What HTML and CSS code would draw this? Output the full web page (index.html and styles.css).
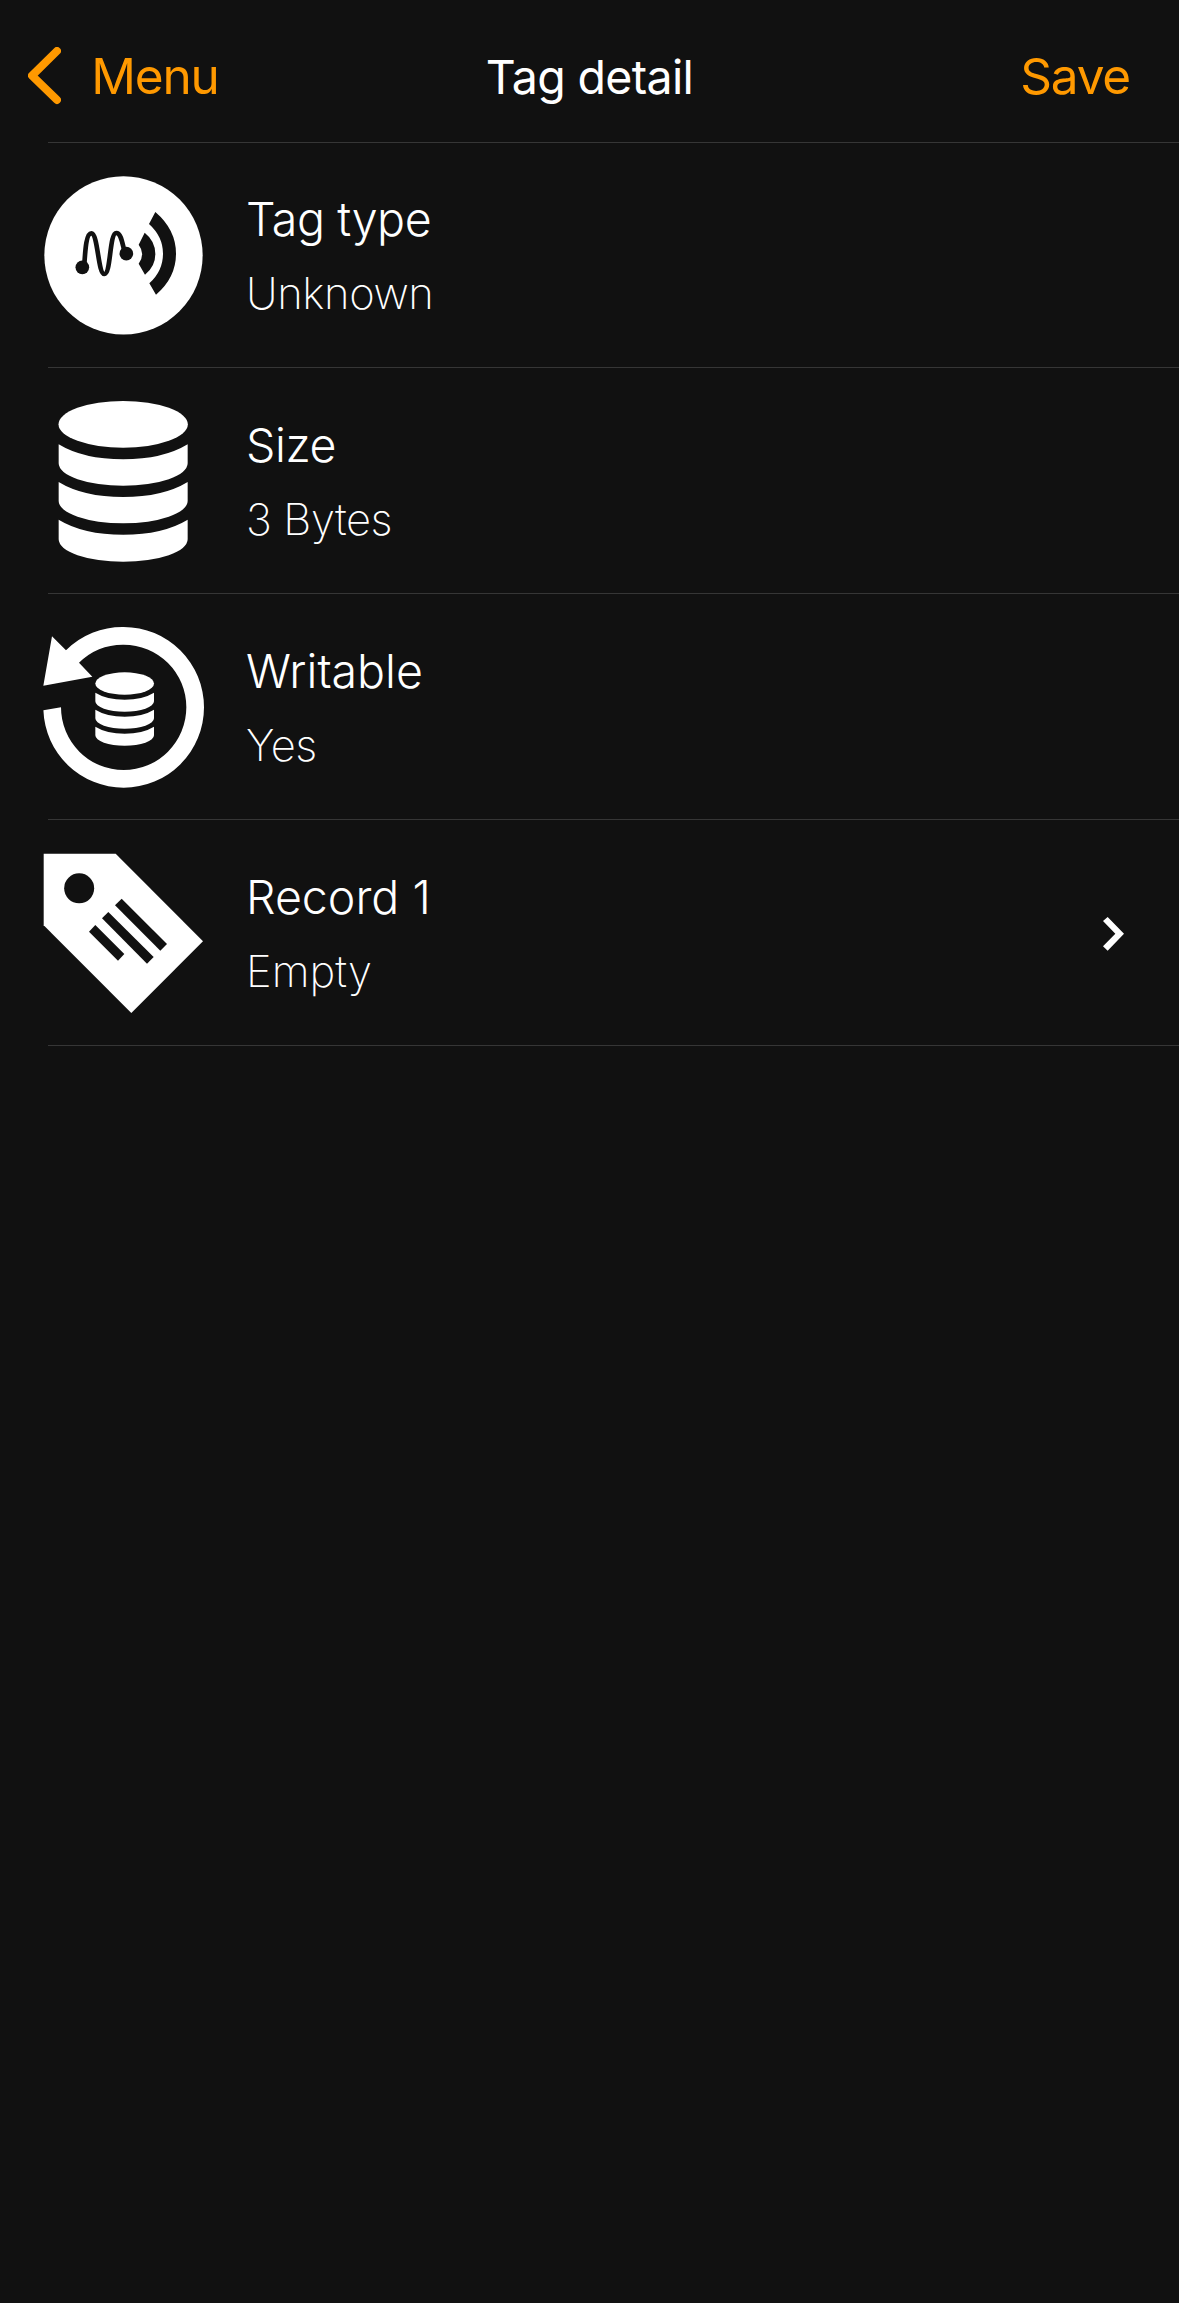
FILE: index.html
```html
<!DOCTYPE html>
<html lang="en">
<head>
<meta charset="utf-8">
<title>Tag detail</title>
<link rel="stylesheet" href="styles.css">
</head>
<body>
<header class="navbar">
  <a class="back">
    <svg class="back-icon" viewBox="84 141 100 172"><path d="M171 153L96 227L171 300"/></svg>
    <span class="back-label">Menu</span>
  </a>
  <h1 class="title">Tag detail</h1>
  <a class="save">Save</a>
</header>
<main>
  <hr class="rule">
  <section class="row row-first">
    <svg class="icon" viewBox="39 48 480 483">
      <circle cx="280.500" cy="286" r="237.500"/>
      <g class="ink">
        <circle cx="157" cy="322" r="20.500"/>
        <circle cx="289" cy="281" r="20.500"/>
        <path d="M344 218Q376 243 376 282Q376 320 345 344L326 311Q347 282 326 254Z"/>
        <path d="M376 156Q438 209 438 281Q438 353 378 404L358 370Q399 333 399 281Q399 230 357 192Z"/>
      </g>
      <path class="wave" d="M163 315C166 262 170 220 184 220C204 220 204 342 223 342C243 342 238 219 259 219C272 219 276 245 283 272"/>
    </svg>
    <div class="text"><div class="name snug">Tag type</div><div class="value snug">Unknown</div></div>
  </section>
  <hr class="rule">
  <section class="row">
    <svg class="icon" viewBox="39 48 480 483">
      <ellipse cx="279.500" cy="118" rx="194" ry="70"/>
      <path d="M86 178Q160 223 279.500 223T473 178V235A193.500 67 0 0 1 86 235Z"/>
      <path d="M86 291Q160 336 279.500 336T473 291V348A193.500 67 0 0 1 86 348Z"/>
      <path d="M86 404Q160 449 279.500 449T473 404V463A193.500 67 0 0 1 86 463Z"/>
    </svg>
    <div class="text"><div class="name snug">Size</div><div class="value snug">3 Bytes</div></div>
  </section>
  <hr class="rule">
  <section class="row">
    <svg class="icon" viewBox="39 51 480 483">
      <path d="M40.200 301A241 241 0 0 0 281 533A241 241 0 0 0 522 292A241 241 0 0 0 281 51A241 241 0 0 0 108 121L66 79L40 227L187 200L147 158A188 188 0 0 1 281 104A188 188 0 0 1 469 292A188 188 0 0 1 281 480A188 188 0 0 1 93 292Z"/>
      <ellipse cx="284" cy="220.500" rx="88" ry="33.500"/>
      <path d="M196 248Q230 269 284 269T372 248V274A88 31 0 0 1 196 274Z"/>
      <path d="M196 299Q230 320 284 320T372 299V325A88 31 0 0 1 196 325Z"/>
      <path d="M196 350Q230 371 284 371T372 350V376A88 31 0 0 1 196 376Z"/>
    </svg>
    <div class="text"><div class="name">Writable</div><div class="value snug">Yes</div></div>
  </section>
  <hr class="rule">
  <section class="row">
    <svg class="icon" viewBox="39 54 480 483">
      <path d="M41 56H257L519 319L304 534L41 271Z"/>
      <g class="ink">
        <circle cx="147.500" cy="160" r="45"/>
        <path d="M275 191L411 327L391 347L255 211Z"/>
        <path d="M235 231L371 366L351 386L216 250Z"/>
        <path d="M196 270L283 357L264 377L177 290Z"/>
      </g>
    </svg>
    <div class="text"><div class="name">Record 1</div><div class="value">Empty</div></div>
    <svg class="chevron" viewBox="132 110 63 102"><path d="M132 122L146 110L195 160L146 211L132 198L169 160Z"/></svg>
  </section>
  <hr class="rule">
</main>
</body>
</html>
```
FILE: styles.css
```css
* { box-sizing: border-box; }
body {
  margin: 0;
  min-height: 2303px;
  background: #111;
  color: #fff;
  font-family: Inter, "Liberation Sans", sans-serif;
}
.navbar {
  height: 142px;
  padding: 10px 28px 0;
  display: grid;
  grid-template-columns: 1fr auto 1fr;
  align-items: center;
}
.back { display: flex; align-items: center; gap: 30px; }
.back-icon { width: 33.300px; height: 57.300px; fill: none; stroke: #ff9900; stroke-width: 24; stroke-linecap: round; stroke-linejoin: round; }
.back-label, .save { font-size: 49.500px; line-height: 60px; letter-spacing: -1.200px; color: #ff9900; }
.save { padding-right: 21px; text-align: right; }
.title { margin: 2px 0 0; font-size: 46.500px; line-height: 60px; letter-spacing: -.650px; font-weight: 400; }
.rule { height: 1px; margin: 0 0 0 48px; border: 0; background: #363636; }
.row { height: 225px; padding: 33px 55px 0 43px; display: flex; align-items: flex-start; }
.row-first { height: 224px; }
.icon { width: 160px; height: 161px; overflow: visible; fill: #fff; flex: none; }
.ink { fill: #111; }
.wave { fill: none; stroke: #111; stroke-width: 14; }
.text { margin: 16px 0 0 43px; flex: 1; }
.row-first .text { margin-top: 15px; }
.name { font-size: 46.500px; line-height: 56px; font-weight: 300; }
.value { margin-top: 18px; font-size: 43.500px; line-height: 56px; font-weight: 200; }
.snug { letter-spacing: -.400px; }
.chevron { width: 21px; height: 34px; margin-top: 64px; fill: #fff; }
```
